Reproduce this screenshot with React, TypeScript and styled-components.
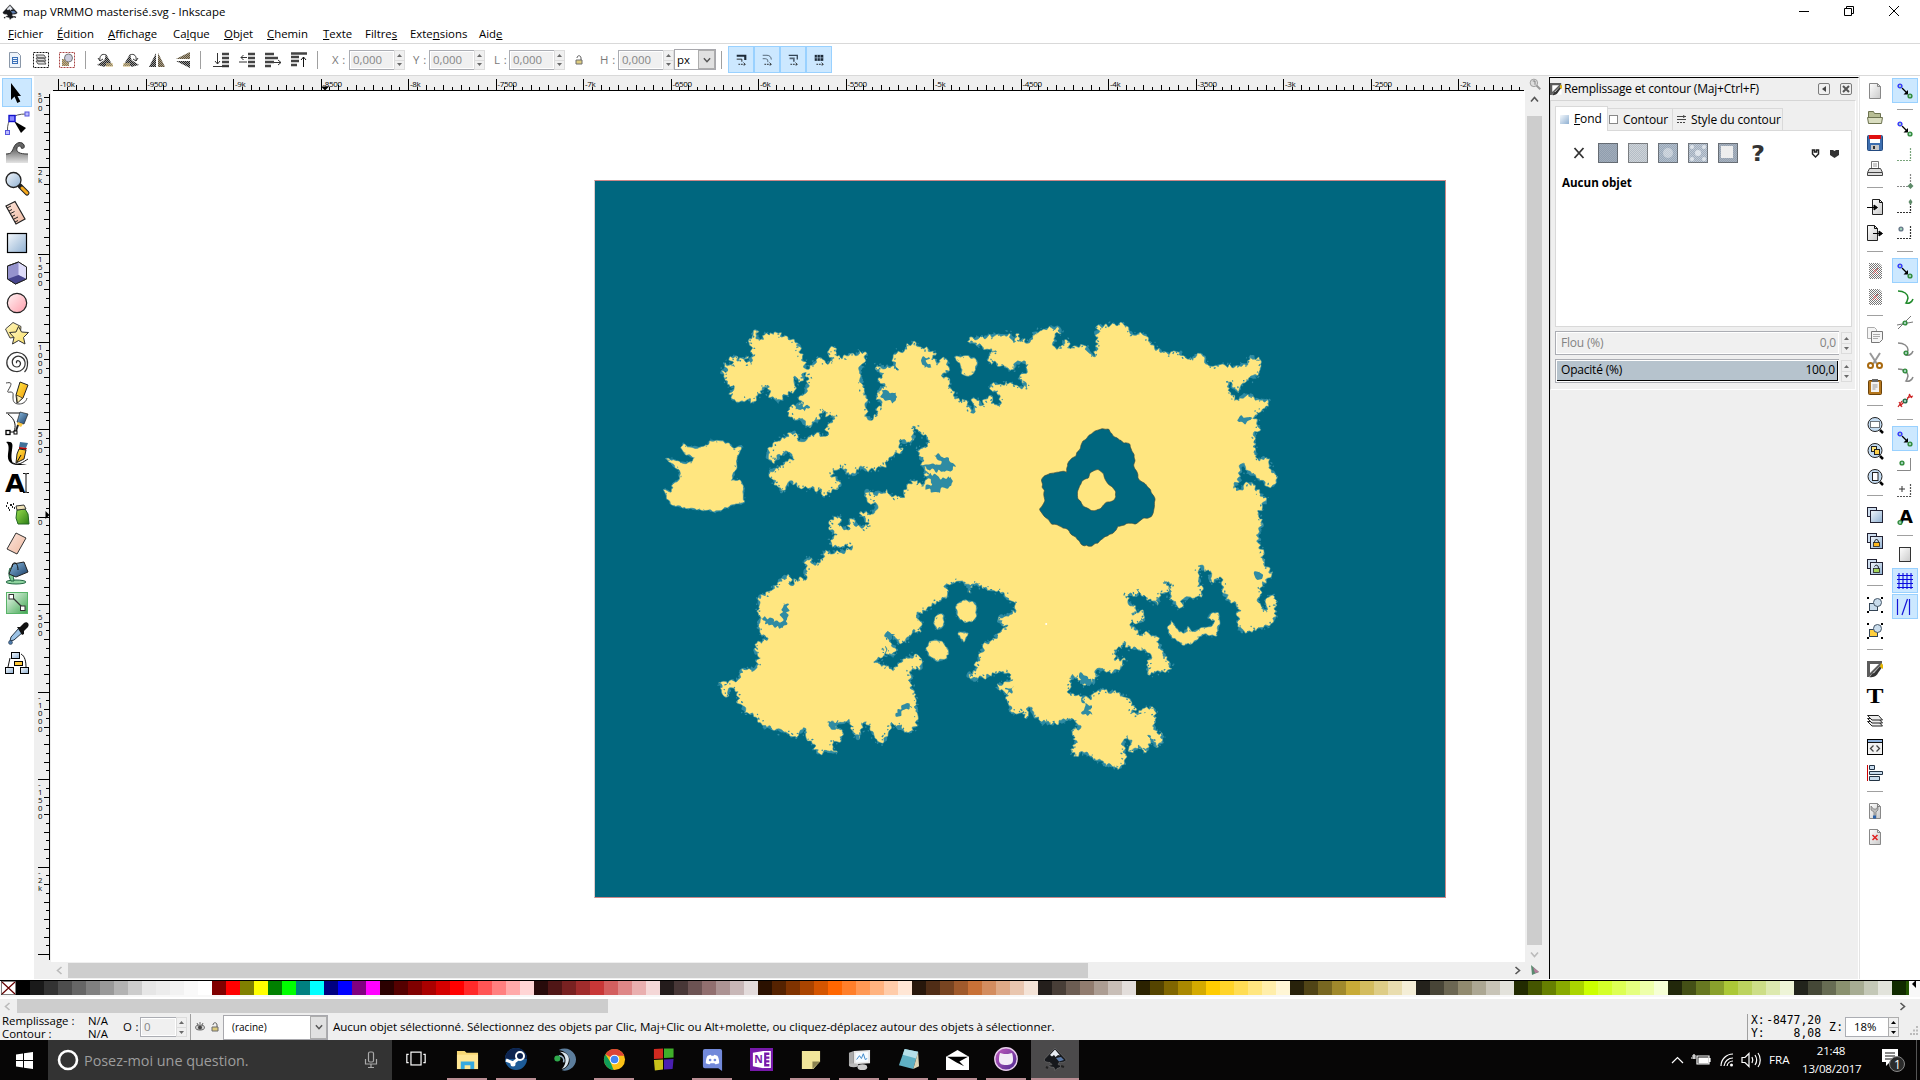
import React from "react";
import styled, { createGlobalStyle } from "styled-components";

const Global = createGlobalStyle`
  *{box-sizing:border-box}
  body{margin:0;overflow:hidden;background:#fff;color:#000;font:11.4px/16px "Open Sans","Noto Sans",sans-serif}
  svg{display:block;flex:none;overflow:visible}
`;

/* ---------- shell ---------- */
const Window = styled.div`width:1920px;height:1080px;display:flex;flex-direction:column;overflow:hidden;background:#fff;`;
const TitleBar = styled.header`height:22px;display:flex;align-items:center;padding:1px 0 0 2px;gap:5px;`;
const TitleText = styled.span`flex:1;letter-spacing:0.02px;`;
const WinButtons = styled.div`display:flex;gap:31px;padding-right:19px;padding-bottom:2px;`;
const MenuBar = styled.nav`height:22px;display:flex;padding:4px 0 0 8px;border-bottom:1px solid #d9d9d9;`;
const MenuItem = styled.span<{ $w: number }>`width:${p => p.$w}px;white-space:nowrap;`;
const Toolbar = styled.div`height:32px;display:flex;align-items:center;padding-left:2px;border-bottom:1px solid #d9d9d9;color:#7a7a7a;`;
const ToolIcon = styled.div`width:26px;height:26px;display:flex;align-items:center;justify-content:center;flex:none;`;
const VSep = styled.i<{ $l?: number; $r?: number; $h?: number }>`width:1px;height:${p => p.$h ?? 18}px;background:#a0a0a0;margin:0 ${p => p.$r ?? 7}px 0 ${p => p.$l ?? 5}px;flex:none;`;
const FieldLabel = styled.span<{ $w: number; $l?: number; $mono?: boolean }>`
  width:${p => p.$w}px;padding-left:${p => p.$l ?? 0}px;flex:none;letter-spacing:.4px;white-space:nowrap;
  ${p => (p.$mono ? 'font-family:"DejaVu Sans Mono",monospace;margin-left:8px;' : "")}
`;
const Entry = styled.div<{ $w: number; $live?: boolean; $pad?: number }>`
  width:${p => p.$w}px;height:20px;border:1px solid #abadb3;border-right:0;
  background:${p => (p.$live ? "#fff" : "#f0f0f0")};color:${p => (p.$live ? "#000" : "#858585")};
  box-shadow:inset 0 0 0 1px #fff;padding:0 0 0 ${p => p.$pad ?? 3}px;line-height:18px;flex:none;
`;
const SpinBox = styled.div<{ $h?: number; $dark?: boolean }>`
  width:11px;height:${p => p.$h ?? 20}px;display:grid;grid-template-rows:1fr 1fr;border:1px solid ${p => (p.$dark ? "#adadad" : "#dcdcdc")};background:#f0f0f0;flex:none;
  & > i{display:flex;align-items:center;justify-content:center}
  & > i + i{border-top:1px solid ${p => (p.$dark ? "#adadad" : "#dcdcdc")}}
`;
const Combo = styled.div<{ $w: number; $h: number; $pad: number; $fs?: number }>`
  width:${p => p.$w}px;height:${p => p.$h}px;border:1px solid #a8a8ad;background:#fff;color:#000;display:flex;align-items:center;
  padding-left:${p => p.$pad}px;justify-content:space-between;font-size:${p => p.$fs ?? 11.4}px;flex:none;
`;
const ComboArrow = styled.span`width:17px;height:100%;background:#e1e1e1;border:1px solid #adadad;display:flex;align-items:center;justify-content:center;`;
const Toggle = styled.div`width:26px;height:27px;background:#cce8ff;border:1px solid #99d1ff;display:flex;align-items:center;justify-content:center;flex:none;`;
const Center = styled.div<{ $w?: number; $h?: number; $l?: number; $r?: number; $gap?: number; $ml?: number }>`
  display:flex;align-items:center;justify-content:center;gap:${p => p.$gap ?? 0}px;
  width:${p => (p.$w ? p.$w + "px" : "auto")};height:${p => (p.$h ? p.$h + "px" : "auto")};
  padding:0 ${p => p.$r ?? 0}px 0 ${p => p.$l ?? 0}px;margin-left:${p => p.$ml ?? 0}px;
`;

/* ---------- body ---------- */
const Body = styled.main`height:903px;display:flex;`;
const ToolBox = styled.aside`width:34px;padding:2px 0 0 2px;display:flex;flex-direction:column;`;
const Tool = styled.div<{ $on?: boolean }>`
  width:30px;height:${p => (p.$on ? 29 : 30)}px;margin-bottom:${p => (p.$on ? 1 : 0)}px;display:flex;align-items:center;justify-content:center;flex:none;
  background:${p => (p.$on ? "#cce8ff" : "transparent")};border:1px solid ${p => (p.$on ? "#99d1ff" : "transparent")};
`;
const Desk = styled.section`
  width:1515px;display:grid;grid-template-columns:17px 1476px 15px;grid-template-rows:15px 871px 16px;background:#efefef;
`;
const RulerSvg = styled.svg`overflow:hidden;`;
const Sheet = styled.div`background:#fff;padding:89px 0 0 543px;margin-right:2px;`;
const Page = styled.div`width:852px;height:718px;border:1px solid #c88;border-left-color:#dcc;background:#00677f;`;
const VScroll = styled.div`display:flex;flex-direction:column;align-items:center;background:#efefef;`;
const VThumb = styled.i`width:15px;height:829px;background:#cdcdcd;margin:8px 0 5px;`;
const HScroll = styled.div<{ $l: number; $r?: number }>`display:flex;align-items:center;justify-content:space-between;padding:0 ${p => p.$r ?? 5}px 0 ${p => p.$l}px;`;
const HThumb = styled.i<{ $w: number; $l: number; $h: number }>`width:${p => p.$w}px;height:${p => p.$h}px;background:#cdcdcd;margin-left:${p => p.$l}px;margin-right:auto;`;

/* ---------- dock ---------- */
const Dock = styled.section`width:310px;margin-top:1px;border-left:1px solid #000;border-top:1px solid #000;background:#efefef;border-right:1px solid #fff;`;
const DockTitle = styled.div`height:22px;display:flex;align-items:center;padding:0 6px 0 0;font-size:12px;`;
const DockName = styled.span`flex:1;padding-left:2px;letter-spacing:-.2px;`;
const DockBtn = styled.span`width:12px;height:12px;border:1px solid #7c7c7c;border-radius:2px;margin-left:10px;display:flex;align-items:center;justify-content:center;`;
const DockFrame = styled.div`width:306px;height:290px;border:1px solid #fff;border-top:1px solid #d5d5d5;border-left-color:#d5d5d5;padding:5px 3px 0 4px;`;
const Tabs = styled.div`display:flex;align-items:flex-end;height:24px;`;
const Tab = styled.div<{ $w: number; $on?: boolean; $l: number }>`
  width:${p => p.$w}px;height:${p => (p.$on ? 25 : 22)}px;margin-bottom:${p => (p.$on ? -1 : 0)}px;padding-left:${p => p.$l}px;
  background:${p => (p.$on ? "#fff" : "#efefef")};border:1px solid #d9d9d9;border-bottom:0;${p => (p.$on ? "" : "border-left:0;")}
  display:flex;align-items:center;gap:5px;font-size:12px;white-space:nowrap;z-index:1;letter-spacing:-.12px;
`;
const TabPane = styled.div`height:197px;border:1px solid #d9d9d9;background:#fff;`;
const PaintRow = styled.div`display:flex;align-items:center;height:22px;margin-top:11px;padding-left:13px;gap:10px;`;
const NoObject = styled.b`display:block;margin:11px 0 0 6px;font-size:11.6px;`;
const SliderRow = styled.div`display:flex;align-items:center;margin-top:4px;gap:2px;`;
const Slider = styled.div<{ $on?: boolean }>`
  width:285px;height:24px;border:1px solid #abadb3;border-right:0;padding:1px;background:#fff;
  & > div{height:20px;padding:0 2px 1px 4px;display:flex;justify-content:space-between;align-items:center;font-size:12px;letter-spacing:-.2px;
    color:${p => (p.$on ? "#000" : "#838383")};background:${p => (p.$on ? "#b6c3cd" : "#f0f0f0")};
    border-right:${p => (p.$on ? "1px solid #000" : "0")};border-bottom:${p => (p.$on ? "1px solid #000" : "0")};}
`;
const SideBars = styled.aside`width:61px;display:flex;border-left:1px solid #e4e4e4;padding-top:2px;`;
const IconCol = styled.div`width:30px;display:flex;flex-direction:column;align-items:center;`;
const SideCell = styled.div<{ $on?: boolean }>`
  width:26px;height:25px;margin-bottom:1px;display:flex;align-items:center;justify-content:center;flex:none;
  background:${p => (p.$on ? "#cce8ff" : "transparent")};border:1px solid ${p => (p.$on ? "#99d1ff" : "transparent")};
`;
const SideSep = styled.i`width:16px;height:1px;background:#a0a0a0;margin:5px 0 6px;flex:none;`;

/* ---------- bottom ---------- */
const PaletteBar = styled.div`height:17px;margin-top:1px;border-top:1px solid #000;background:#f8f8f8;display:flex;padding-left:1px;`;
const Swatches = styled.div`display:flex;width:1908px;height:14px;overflow:hidden;`;
const Swatch = styled.i<{ $c: string }>`width:14px;height:14px;flex:none;background:${p => p.$c};`;
const PaletteScroll = styled.div`height:17px;background:#efefef;border-top:2px solid #fff;`;
const Status = styled.footer`height:26px;background:#efefef;display:flex;align-items:center;`;
const StylePair = styled.div`width:121px;display:grid;grid-template-columns:86px 1fr;line-height:13px;padding-left:2px;`;
const Message = styled.span`flex:1;padding-left:5px;white-space:nowrap;font-size:11.6px;letter-spacing:-.07px;`;
const Coords = styled.div`width:70px;font:11.4px/13px "DejaVu Sans Mono",monospace;& > div{display:flex;justify-content:space-between}`;
const Taskbar = styled.footer`height:40px;background:#070606;display:flex;color:#fff;`;
const Start = styled.div`width:48px;display:flex;align-items:center;justify-content:center;`;
const Search = styled.div`width:344px;background:#333;color:#9d9d9d;display:flex;align-items:center;padding:0 14px 0 9px;font-size:14.4px;`;
const SearchText = styled.span`flex:1;padding:1px 0 0 5px;letter-spacing:-.02px;`;
const Apps = styled.div`display:flex;flex:1;`;
const AppTile = styled.div<{ $line?: boolean; $on?: boolean }>`
  width:48px;margin-right:1px;height:40px;display:grid;grid-template-rows:38px 2px;justify-items:center;align-items:center;background:${p => (p.$on ? "#4b4a4b" : "transparent")};
  &:first-child{margin-right:3px}
  &::after{content:"";width:${p => (p.$on ? 48 : 40)}px;height:2px;background:${p => (p.$line ? "#b98d93" : "transparent")}}
`;
const Tray = styled.div`display:flex;align-items:center;`;
const Lang = styled.span`font-size:11.6px;width:33px;margin-left:-10px;`;
const Clock = styled.div`width:58px;text-align:center;line-height:18px;font-size:11.6px;letter-spacing:-.2px;`;
const Bell = styled.div`width:32px;margin:0 6px 0 18px;display:flex;align-items:center;`;
const Edge = styled.i`width:1px;height:40px;background:#555;margin-right:3px;`;
const HiddenDefs = styled.svg`position:absolute;width:0;height:0;`;

/* ---------- small glyphs ---------- */
const Tri = ({ up, c = "#6a6a6a" }: { up?: boolean; c?: string }) => (
  <svg width="5" height="3" viewBox="0 0 5 3"><path d={up ? "M0 3h5L2.5 0z" : "M0 0h5L2.5 3z"} fill={c} /></svg>
);
const Spin = ({ h, c }: { h?: number; c?: string }) => <SpinBox $h={h} $dark={!!c}><i><Tri up c={c} /></i><i><Tri c={c} /></i></SpinBox>;
const Chev = ({ r = 0, c = "#555", s = 9, w = 1.6 }: { r?: number; c?: string; s?: number; w?: number }) => (
  <svg width={s} height={s} viewBox="0 0 9 9" transform={`rotate(${r})`}><path d="M1 2.5l3.5 4 3.5-4" fill="none" stroke={c} strokeWidth={w} /></svg>
);
const K = { fill: "none", stroke: "#111", strokeWidth: 1 } as const;
const I = ({ s = 16, v = s, children }: { s?: number; v?: number; children: React.ReactNode }) => (
  <svg width={s} height={s} viewBox={`0 0 ${v} ${v}`}>{children}</svg>
);
const Defs = () => (
  <HiddenDefs>
    <defs>
      {[["gb", "#f4f8fc", "#8fb0d2"], ["gp", "#fff5f5", "#ff9dab"], ["gy", "#fff8c8", "#f8dc60"], ["gs", "#fbe5dc", "#f0b9a0"], ["gg", "#f2fbf3", "#3fa650"], ["gw", "#fff", "#c9c9c9"], ["go", "#fff04a", "#f08a00"], ["gn", "#8fc0e6", "#173a63"], ["ggr", "#9be04e", "#2b7d15"], ["gv", "#c55bc0", "#4a2a90"]].map(([id, a, b]) => (
        <linearGradient key={id} id={id} x1="0" y1="0" x2="1" y2="1"><stop offset="0" stopColor={a} /><stop offset="1" stopColor={b} /></linearGradient>
      ))}
      <linearGradient id="gk" x1="0" y1="0" x2="0" y2="1"><stop offset=".3" stopColor="#666" /><stop offset="1" stopColor="#e4e4e4" /></linearGradient>
      <pattern id="chk" width="2" height="2" patternUnits="userSpaceOnUse"><path d="M0 0h1v1H0zM1 1h1v1H1z" fill="#8292a6" /></pattern>
      <pattern id="chd" width="2" height="2" patternUnits="userSpaceOnUse"><path d="M0 0h2v2H0z" fill="#999" /><path d="M0 0h1v1H0zM1 1h1v1H1z" fill="#222" /></pattern>
      <pattern id="chg" width="2" height="2" patternUnits="userSpaceOnUse"><path d="M0 0h1v1H0zM1 1h1v1H1z" fill="#777" /></pattern>
    </defs>
  </HiddenDefs>
);
const InkLogo = ({ s = 16 }: { s?: number }) => (
  <I s={s} v={24}>
    <path d="M12 1L2 11.500c-2 2.500 1 4 5 4l2 2c-2 1-4 0-3 2 2 0 3 1 5 1l1 3 2-2 3-1 1-2c-2-1-4 0-2-3 4 0 9-1 6-4z" fill="#16181c" stroke="#777" strokeWidth=".6" />
    <path d="M12 2.500L7 8l2 1.500 2-1.500 1.500 2L15 8l2 .5z" fill="#e7ebf2" />
    <path d="M13 11l5-1 3 3-5 1.500z" fill="#5b7aa8" /><path d="M3 20l2 1M18 19l3 1" stroke="#222" strokeWidth="2" />
  </I>
);

/* ---------- toolbox ---------- */
const toolIcons: React.ReactNode[] = [
  <path d="M6 2v17l3.500-3.500 2.800 6.500 3-1.500-2.800-5.500H16z" fill="#000" />,
  <><path d="M2.500 20C2 8 8 3 21 3" {...K} stroke="#555" /><path d="M9 10l12 7-5 5z" fill="#000" /><rect x="4" y="4.500" width="6" height="6" fill="#88f" stroke="#11c" strokeWidth="1.400" /><rect x="20" y="1" width="4" height="4" fill="#bbf" stroke="#55d" /><rect x=".5" y="19.500" width="4" height="4" fill="#bbf" stroke="#55d" /></>,
  <><path d="M1 13c6 0 6-3 8-7 2-5 8-6 10-2 1 3-1 4-3 3 1-2-3-3-4 0-1 4 2 6 11 6v9H1z" fill="url(#gk)" /><path d="M1 13c6 0 6-3 8-7 2-5 8-6 10-2 1 3-1 4-3 3 1-2-3-3-4 0-1 4 2 6 11 6" {...K} stroke="#333" /></>,
  <><path d="M15 15l7 7" stroke="#222" strokeWidth="5" strokeLinecap="round" /><path d="M17 17l5 5" stroke="#f5a81c" strokeWidth="3" strokeLinecap="round" /><circle cx="8.500" cy="9" r="7.500" fill="url(#gb)" stroke="#222" strokeWidth="1.300" /></>,
  <><path d="M1 5l9-4.500L20 18l-9 5z" fill="url(#gs)" stroke="#222" strokeWidth="1.200" /><path d="M2 7l4-2M4 10l3-1.500M5.500 12.500l4-2M7 15.500l3-1.500M9 18l4-2M10 21l3-1.500" stroke="#222" /></>,
  <rect x="2.500" y="2.500" width="19" height="19" fill="url(#gb)" stroke="#000" strokeWidth="1.200" />,
  <><path d="M2.500 5l11-4L21.500 6v12l-11 5-8-5z" fill="#9593cd" stroke="#222" /><path d="M13.500 1l8 5v12l-8-4z" fill="#dedcfa" /><path d="M2.500 18l11-4 8 4-11 5z" fill="#47458e" /><path d="M2.500 5l11-4L21.500 6v12l-11 5-8-5z" {...K} stroke="#222" /></>,
  <circle cx="12" cy="12" r="9.700" fill="url(#gp)" stroke="#222" strokeWidth="1.200" />,
  <><path d="M.5 8L8 1.500l8 4-1 10-10 1.500z" fill="url(#gy)" stroke="#444" /><path d="M13.500 5.500l3 5.500 7 .5-5 5 1.500 6.500-6.500-3.500-6 3.500 1.500-6.500-4.500-5 6.500-.5z" fill="url(#gy)" stroke="#333" /></>,
  <path d="M12 12c-1.500-1 0-3 2-2 3 2 1 6-2 6-5 0-6-6-3-9 4-4 10-1 11 4 1 6-4 10-9 9.500C4 20 1 15 2 9.500 3.500 4 8 1 13 1.500c6 .5 10 5.500 9.500 11.500 0 3-1 6-3 8" {...K} stroke="#333" strokeWidth="1.200" />,
  <><path d="M1 2c5-1 6 0 4 4s-4 6 0 5c4 0 3 2 3 5s0 7 6 7c4 0 7-2 8-6" {...K} stroke="#444" /><path d="M15 1l8 3-5 13-6 5-1-8z" fill="url(#go)" stroke="#222" /><path d="M11.500 14l6 3-5 5z" fill="#fdeeb2" stroke="#222" strokeWidth=".7" /></>,
  <><path d="M1 2h15M3 3c8 6 8 12 6 18H4" {...K} /><path d="M15 1l8 2-4 10-7-2z" fill="url(#gn)" stroke="#222" strokeWidth=".7" /><path d="M13 11l5 2-2 3-4-2z" fill="#f7c543" /><path d="M13 14l-2 6" stroke="#222" strokeWidth="2" /><rect x="1" y="19.500" width="4" height="4" fill="#fff" stroke="#000" strokeWidth="1.300" /><rect x="9" y="20" width="3" height="3" fill="#fff" stroke="#000" /></>,
  <><path d="M1 1c7-1 7 2 6 8-1 7-1 13 3 14h12C7 26 2 22 3 13 4 7 4 3 1 1z" fill="#000" /><path d="M8 22c6 3 10-1 15-4" {...K} /><path d="M15 1l8 1-2 5-7-1z" fill="#3f7199" /><path d="M14 6l8 1-1 2-7-1z" fill="#b00" /><path d="M14 8l7 1-2 9-8 4 1-9z" fill="url(#go)" stroke="#222" /><path d="M12 21l4-7" stroke="#111" /></>,
  <><text x="0" y="21" fontFamily="DejaVu Sans" fontWeight="bold" fontSize="24" textLength="20" lengthAdjust="spacingAndGlyphs">A</text><path d="M18 2.500h2l1 .5 1-.5h2M21 3v18M18 21.500h2l1-.5 1 .5h2" {...K} /></>,
  <><path d="M12 9l8-1 3 5 1 10H13l-2-6z" fill="url(#ggr)" stroke="#262" /><path d="M11 5l8-1 2 4-9 1z" fill="#efe3b8" stroke="#333" /><path d="M2 2h1M5 4h2M3 7h1M7 6h1M8 3h1M4 9h1M1 5h1M9 7h1" stroke="#222" strokeWidth="2" /></>,
  <path d="M11 2l10 5-9 16-10-5z" fill="url(#gs)" stroke="#333" />,
  <><ellipse cx="11" cy="21" rx="10" ry="2" fill="#8fd39f" stroke="#264" /><path d="M5 7c-2 5-1 9 1 13h3c-1-5-1-9 0-12z" fill="#7fca93" stroke="#264" /><path d="M8 3l11-2 4 10-12 5-7-3z" fill="url(#gn)" stroke="#222" /><path d="M7 6c0-6 6-6 6 3" {...K} /></>,
  <><rect x="1.500" y="1.500" width="21" height="21" fill="url(#gg)" stroke="#58b368" /><path d="M8 7l9 9" {...K} stroke="#333" strokeWidth="1.300" /><rect x="4" y="3.500" width="4.500" height="4.500" fill="#fff" stroke="#333" /><rect x="15.500" y="15" width="4.500" height="4.500" fill="#fff" stroke="#333" /></>,
  <><path d="M14 7l4 4-9 8-4 1 1-4z" fill="#9cc3e6" stroke="#234" /><path d="M12 6l3 0 4-4c3-2 6 1 4 4l-4 4 0 3-2 1z" fill="#111" /><circle cx="5.500" cy="21.500" r="2" fill="#4d79a8" stroke="#234" strokeWidth=".5" /></>,
  <><path d="M5 7L3 16M16 3c4 2 5 8 5 13" {...K} /><rect x="6.500" y="1.500" width="8" height="6" fill="url(#gb)" stroke="#000" /><rect x="9.500" y="10.500" width="8" height="4" fill="#ffc93a" stroke="#000" /><rect x=".5" y="16.500" width="8" height="6" fill="url(#gb)" stroke="#000" /><rect x="15.500" y="16.500" width="8" height="6" fill="url(#gb)" stroke="#000" /></>,
];

/* ---------- command column ---------- */
const sheet = <><path d="M2.500 .5h8l3 3v12h-11z" fill="url(#gw)" stroke="#888" /><path d="M10.500 .5v3h3" {...K} stroke="#888" /></>;
const lens = (inner: React.ReactNode) => <><circle cx="8" cy="7.500" r="7" fill="#c4dcf2" stroke="#222" strokeWidth="1" />{inner}<path d="M13 13l3 3" stroke="#000" strokeWidth="2.500" /></>;
const dup = (inner?: React.ReactNode) => <><rect x=".5" y=".5" width="9" height="9" fill="#cfdff0" stroke="#223" /><rect x="3.500" y="3.500" width="12" height="12" fill="url(#gb)" stroke="#223" />{inner}</>;
const grp = (c: string) => <><rect x="2.500" y="6.500" width="8" height="7" fill={c} stroke="#345" /><circle cx="10.500" cy="5.500" r="4" fill="#c9dcec" stroke="#456" /><path d="M0 1h2M0 15h2M14 1h2M14 15h2" stroke="#000" strokeWidth="2" /></>;
const deadDoc = <><path d="M2 0h10l3 3v13H2z" fill="url(#chg)" /><path d="M6 11l5-6M6 6l5 5" stroke="#c66" /></>;
const fillStroke = <><rect x=".5" y=".5" width="15" height="15" fill="#fff" /><path d="M0 0h15v3L4 14l-2 2H0z" fill="#333" opacity=".8" /><path d="M3 3h9L3 12z" fill="#fff" /><path d="M15 3L7 12c-3 0-2 3-5 4 6 1 8-2 9-4l5-7z" fill="#333" /><path d="M14 2l2 2v4l-3-2z" fill="#e6b800" /></>;
const commands: (React.ReactNode | null)[] = [
  sheet,
  <><path d="M1.500 14V2.500h5l1 2h6V14z" fill="#b7bd94" stroke="#6d7350" /><path d="M.5 8.500h15l-1 6h-13z" fill="#d9ddc0" stroke="#6d7350" /></>,
  <><rect x=".5" y=".5" width="15" height="15" rx="1" fill="#3d6fb0" stroke="#234a80" /><path d="M2 0h12v4H2z" fill="#e01010" /><path d="M3 4h10v4H3z" fill="#fff" /><path d="M4 10h8v5H4z" fill="#c8c8c8" /><path d="M6 11h2v3H6z" fill="#333" /></>,
  <><path d="M4.500 7V.5h7V7" fill="#fff" stroke="#777" /><path d="M6 3h4M6 5h4" stroke="#999" /><path d="M2.500 7.500h11l2 4v3H.5v-3z" fill="#ddd" stroke="#444" /><path d="M1 11.500h14" stroke="#444" /></>,
  null,
  <><path d="M5.500.5h7l3 3v12h-10z" fill="url(#gw)" stroke="#222" /><path d="M12.500.5v3h3" {...K} /><path d="M0 8.500h8M7 6l3.500 2.500L7 11z" fill="#000" stroke="#000" /></>,
  <><path d="M.5.5h7l3 3v12H.5z" fill="url(#gw)" stroke="#222" /><path d="M7.500.5v3h3" {...K} /><path d="M6 8.500h8M12 6l3.500 2.500L12 11z" fill="#000" stroke="#000" /></>,
  null, deadDoc, deadDoc, null,
  <><path d="M.5.500h7l2 2v9h-9z" fill="#f5f5f5" stroke="#aaa" /><path d="M4.500 4.500h11v8l-3 3h-8z" fill="#f5f5f5" stroke="#777" /><path d="M6 7.500h7M6 9.500h7M6 11.500h5" stroke="#aaa" /></>,
  <><path d="M3 0l7 11M13 0L6 11" stroke="#999" strokeWidth="2" /><circle cx="3.500" cy="12.500" r="2.500" fill="none" stroke="#a8690f" strokeWidth="2" /><circle cx="12.500" cy="12.500" r="2.500" fill="none" stroke="#a8690f" strokeWidth="2" /></>,
  <><rect x="1.500" y="1.500" width="13" height="14" rx="1" fill="#b5771d" stroke="#6b430a" /><path d="M4 3h8v10H4z" fill="#f4f4f4" /><path d="M5 0h6v3H5z" fill="#666" /><path d="M5.500 6h5M5.500 8h5M5.500 10h3" stroke="#999" /></>,
  null,
  lens(<rect x="3.500" y="4.500" width="9" height="6" fill="#fff" stroke="#000" strokeDasharray="1 1" />),
  lens(<><rect x="4.500" y="3.500" width="5" height="5" fill="#ffe57a" stroke="#222" /><rect x="7.500" y="6.500" width="5" height="5" fill="#ffd24a" stroke="#222" /></>),
  lens(<rect x="5.500" y="3.500" width="5.500" height="8" fill="#fff" stroke="#222" />),
  null, dup(),
  dup(<><rect x="6.500" y="9.500" width="6" height="4" fill="#ffb81c" stroke="#222" strokeWidth=".8" /><path d="M7.500 9.500c0-4 4-4 4 0" {...K} /></>),
  dup(<><rect x="6.500" y="9.500" width="6" height="4" fill="#a3d55a" stroke="#222" strokeWidth=".8" /><path d="M7.500 7.500c1-2 4-2 4 2" {...K} /></>),
  null, grp("#c9dcec"), grp("#ffcf3e"), null,
  fillStroke,
  <text x="-.5" y="15.500" fontFamily="Liberation Serif" fontWeight="bold" fontSize="22" textLength="17" lengthAdjust="spacingAndGlyphs">T</text>,
  <g fill="#eee" stroke="#222"><path d="M.5 8.500h11l4 4.500H5z" /><path d="M.5 5.500h11l4 4.500H5z" /><path d="M.5 2.500h11l4 4.500H5z" /></g>,
  <><rect x=".5" y=".5" width="15" height="15" fill="#f2f2f2" stroke="#000" /><path d="M1 1h14v2H1z" fill="#8fb4e0" /><path d="M1 3.500h14" {...K} /><path d="M6.500 6.500l-3 3 3 3M9.500 6.500l3 3-3 3" {...K} stroke="#444" strokeWidth="1.300" /></>,
  <><path d="M.5 0v16" stroke="#c00" /><g fill="#c9dcee" stroke="#234"><path d="M2.500.5h5v4h-5zM2.500 6.500h13v3h-13zM2.500 11.500h10v4h-10z" /></g></>,
  null,
  <>{sheet}<path d="M4 3v4l3 2v6h2V9l2-2V3L9.500 6h-3z" fill="#bbb" stroke="#666" strokeWidth=".6" /><path d="M6 12.500h3v3H6z" fill="#2a62ab" /></>,
  <>{sheet}<path d="M5.500 6l5 5M10.500 6l-5 5" stroke="#e02020" strokeWidth="1.500" /></>,
];

/* ---------- snap column ---------- */
const node = (x: number, y: number, c = "#2f8a3a") => <circle cx={x} cy={y} r="1.900" fill="#9fd0b8" stroke={c} strokeWidth="1.400" />;
const snapMain = <><path d="M5 5l5 5" stroke="#000" strokeWidth="1.300" /><path d="M11 7v4.500H6.500z" fill="#000" />{node(3, 3, "#33f")}{node(13, 13)}</>;
const dashCorner = (c = "#777") => <path d="M13.500 1v12.500H0" fill="none" stroke={c} strokeWidth="1.200" strokeDasharray="2 1" />;
const curve = (c: string) => <path d="M1 2c6 0 10 3 10 7-.5 2-1 4-2 5 3 1 6-1 7-4" fill="none" stroke={c} strokeWidth="1.500" />;
const snaps: ({ on?: boolean; g: React.ReactNode } | null)[] = [
  { on: true, g: snapMain }, null, { g: snapMain },
  { g: dashCorner("#79a57c") }, { g: <>{dashCorner("#888")}<path d="M13.500 10l3 3-3 3-3-3z" fill="#5d8a68" /></> },
  { g: <>{dashCorner("#333")}<path d="M13.500 0l2 3-2 3-2-3z" fill="#5d8a68" /></> },
  { g: <>{dashCorner("#333")}{node(4, 4, "#678")}</> }, null,
  { on: true, g: snapMain }, { g: curve("#1f8a2a") },
  { g: <><path d="M1 14L14 1M0 10l16-3" {...K} stroke="#777" />{node(8, 8)}</> },
  { g: <>{curve("#888")}{node(9, 12)}</> }, { g: <>{curve("#888")}{node(8, 4)}</> },
  { g: <><path d="M1 14l4-6M2 9l3 5M3 13l4-4M10 7l3-6M12 1l3 4M10 5l6-2" stroke="#c22" strokeWidth="1.200" />{node(8, 8, "#264")}</> },
  null, { on: true, g: snapMain },
  { g: <><path d="M13.500 1v12.500H0" {...K} stroke="#888" />{node(5, 6)}</> },
  { g: <>{dashCorner("#555")}<path d="M5 3v6M2 6h6" {...K} stroke="#333" /></> },
  { g: <><text x="2" y="14" fontFamily="DejaVu Sans" fontWeight="bold" fontSize="18">A</text>{node(3, 13.5)}</> },
  null,
  { g: <rect x="2.500" y=".5" width="11" height="14" fill="url(#gw)" stroke="#333" /> },
  { on: true, g: <path d="M0 2.500h16M0 6.500h16M0 10.500h16M0 14.500h16M2 0v16M6 0v16M10 0v16M14 0v16" stroke="#0a0ae0" strokeWidth="1.100" /> },
  { on: true, g: <path d="M.5 0v16M12.500 0v16M5 16L10.500 0" stroke="#1414d8" strokeWidth="1.200" /> },
];

/* ---------- rulers ---------- */
const hLabels = ["-10k", "-9500", "-9k", "-8500", "-8k", "-7500", "-7k", "-6500", "-6k", "-5500", "-5k", "-4500", "-4k", "-3500", "-3k", "-2500", "-2k"];
const vLabels = ["2500", "2k", "1500", "1000", "500", "0", "-500", "-1000", "-1500", "-2k", "-2500"];
const HRuler = () => {
  const ticks: React.ReactNode[] = [];
  for (let i = 0; i < 168; i++) {
    const x = Math.round(7 + i * 8.75) + 0.5;
    if (x > 1472) break;
    ticks.push(<path key={i} d={`M${x} ${i % 10 === 0 ? 3 : i % 2 ? 11 : 9}V14`} stroke="#000" />);
  }
  return (
    <RulerSvg width="1476" height="15">
      {ticks}
      {hLabels.map((l, i) => <text key={l} x={9 + i * 87.5} y="10.500" fontSize="8" letterSpacing="-.35">{l}</text>)}
      <path d="M2 14.500H1473" stroke="#000" /><path d="M270 10.500h8l-4 4z" />
    </RulerSvg>
  );
};
const VRuler = () => {
  const ticks: React.ReactNode[] = [];
  for (let i = 0; i < 104; i++) {
    const y = Math.round(-12 + i * 8.75) + 0.5;
    if (y < 3 || y > 868) continue;
    ticks.push(<path key={i} d={`M${i % 10 === 0 ? 4 : i % 2 ? 12 : 10} ${y}H15`} stroke="#000" />);
  }
  return (
    <RulerSvg width="17" height="871">
      {ticks}
      {vLabels.map((l, i) => l.split("").map((ch, j) => {
        const y = -5 + i * 87.5 + j * 8;
        return y > 0 && y < 870 ? <text key={l + j} x="4" y={y < 4 ? 6 : y + 1} fontSize={y < 4 ? 6 : 7.8}>{ch}</text> : null;
      }))}
      <path d="M15.500 3V869" stroke="#000" /><path d="M11.500 420v8l4-4z" />
    </RulerSvg>
  );
};

/* ---------- map ---------- */
const coast = "245,212 262,218 250,190 268,192 280,200 275,170 290,168 300,182 308,170 325,168 318,185 335,190 340,160 332,130 328,115 342,115 340,95 354,92 352,108 360,122 375,106 400,100 418,100 430,112 450,115 465,125 478,132 480,155 488,170 497,190 498,205 510,208 520,195 530,178 550,180 565,190 580,188 568,165 572,148 584,142 590,152 588,165 610,172 635,162 655,160 660,152 675,155 676,180 665,195 668,230 665,260 672,285 686,300 680,320 678,345 690,358 705,352 715,340 712,325 726,320 720,300 710,290 712,275 722,262 740,260 728,250 715,240 730,232 722,215 708,210 710,192 722,195 735,205 745,195 775,212 757,185 762,170 770,160 790,152 800,135 815,130 828,125 835,140 855,145 880,152 888,165 880,178 900,188 905,178 925,180 930,205 920,218 908,225 930,245 937,265 945,290 960,305 975,300 985,310 1000,340 1002,318 1000,295 1015,300 1030,318 1037,300 1055,290 1062,312 1078,318 1086,305 1082,285 1060,275 1050,262 1055,250 1080,255 1100,245 1130,258 1165,262 1140,240 1160,215 1165,195 1145,185 1130,190 1125,212 1105,205 1085,200 1070,190 1045,185 1050,165 1070,160 1050,150 1030,140 1010,132 990,130 988,120 1000,115 1020,112 1070,105 1115,100 1120,125 1135,98 1140,120 1155,118 1160,130 1178,115 1185,95 1205,88 1225,82 1260,85 1265,100 1245,105 1250,120 1240,140 1265,145 1275,120 1288,125 1295,145 1310,140 1320,135 1340,140 1348,155 1365,170 1372,150 1370,110 1375,80 1400,75 1450,72 1470,95 1490,105 1510,100 1525,120 1545,140 1570,155 1600,158 1620,152 1630,170 1660,180 1675,160 1700,178 1710,200 1735,195 1760,197 1800,195 1825,190 1832,165 1845,175 1862,175 1860,205 1855,230 1825,240 1808,255 1800,272 1785,272 1780,250 1762,242 1768,270 1783,300 1800,290 1830,280 1845,300 1888,300 1880,320 1850,335 1845,350 1862,375 1855,395 1842,410 1845,450 1855,482 1875,470 1892,485 1895,510 1908,525 1905,555 1885,558 1865,540 1840,525 1820,510 1810,490 1805,510 1800,545 1785,555 1800,570 1815,555 1835,548 1845,565 1865,580 1880,605 1865,625 1855,640 1870,670 1858,690 1860,740 1870,760 1875,790 1900,822 1885,835 1865,860 1855,895 1865,910 1870,935 1885,925 1880,905 1895,885 1905,895 1912,935 1900,960 1885,980 1860,985 1830,992 1800,992 1795,960 1800,925 1780,905 1760,900 1752,870 1740,828 1725,840 1712,850 1715,820 1700,810 1675,798 1680,820 1675,860 1690,865 1685,890 1650,895 1630,900 1625,925 1600,905 1590,885 1598,850 1570,842 1588,865 1575,880 1560,880 1555,915 1535,905 1515,885 1500,885 1495,868 1490,890 1470,882 1458,885 1468,905 1490,925 1480,945 1500,930 1515,940 1510,965 1490,970 1480,960 1470,975 1485,980 1500,1005 1530,1000 1555,1010 1560,1030 1570,1060 1600,1105 1570,1115 1525,1120 1525,1090 1535,1075 1530,1055 1490,1050 1465,1040 1455,1025 1445,1045 1422,1050 1425,1075 1460,1080 1445,1100 1420,1115 1395,1110 1370,1110 1380,1130 1350,1155 1330,1150 1300,1125 1290,1155 1285,1180 1320,1190 1355,1200 1370,1175 1395,1168 1430,1175 1450,1185 1465,1195 1475,1215 1490,1225 1470,1240 1490,1245 1515,1225 1543,1225 1545,1260 1550,1300 1570,1298 1570,1325 1555,1342 1540,1330 1525,1305 1535,1330 1515,1358 1500,1335 1485,1350 1470,1358 1475,1330 1465,1312 1452,1325 1455,1385 1435,1408 1425,1395 1400,1400 1370,1375 1350,1370 1330,1355 1310,1370 1295,1355 1305,1330 1302,1285 1320,1285 1310,1265 1280,1262 1230,1272 1200,1262 1180,1240 1170,1220 1160,1258 1150,1230 1120,1245 1110,1220 1100,1195 1105,1180 1080,1175 1075,1150 1110,1145 1115,1125 1080,1110 1050,1125 1015,1140 988,1135 985,1120 1010,1115 1010,1090 1018,1070 1030,1040 1060,1020 1080,1000 1105,975 1080,970 1075,955 1110,940 1130,930 1125,905 1105,900 1095,878 1060,870 1020,860 1000,850 990,880 985,855 960,845 940,850 918,855 925,885 900,900 870,920 832,945 845,975 840,1000 820,990 805,1010 800,1030 775,1025 760,1005 738,1000 750,1020 770,1045 765,1070 745,1060 735,1040 740,1070 705,1080 735,1095 760,1110 775,1090 800,1070 835,1065 845,1090 840,1110 808,1110 815,1150 825,1190 830,1240 832,1270 820,1295 790,1290 765,1270 750,1275 745,1310 725,1330 705,1315 700,1295 680,1270 668,1268 665,1300 658,1318 640,1290 630,1260 600,1270 575,1265 590,1280 610,1290 605,1320 580,1320 580,1340 595,1355 530,1358 518,1330 500,1310 490,1280 470,1315 450,1300 430,1300 410,1285 380,1285 355,1255 340,1240 315,1240 310,1215 292,1205 295,1175 270,1165 268,1188 245,1170 237,1150 265,1152 300,1135 305,1110 345,1105 360,1075 345,1055 355,1030 385,1015 365,1000 355,975 358,945 355,900 370,885 400,870 415,850 448,822 455,855 470,840 500,835 498,775 515,775 520,790 545,785 555,750 580,760 630,750 638,735 600,742 570,735 575,715 590,710 570,690 575,660 600,645 605,665 600,680 625,690 628,665 645,655 650,680 690,680 685,665 662,650 665,635 690,645 705,630 710,612 685,605 675,580 690,568 700,585 740,568 755,590 785,595 800,570 820,540 845,555 860,540 858,510 845,490 840,460 830,450 860,440 872,430 850,405 820,378 815,395 825,420 800,430 785,420 780,435 790,450 760,465 745,485 725,505 690,510 650,505 645,525 620,522 610,495 580,510 575,525 600,545 595,565 570,575 555,590 545,570 510,565 480,560 455,545 440,560 430,580 415,560 395,535 390,510 410,505 425,505 440,485 462,480 455,458 420,465 405,487 388,480 383,460 400,440 415,420 440,410 455,395 470,400 475,420 500,415 540,400 560,412 570,405 560,380 580,365 588,345 565,350 548,328 540,355 520,375 505,378 480,360 455,350 445,335 455,315 490,315 480,300 500,265 508,230 498,218 480,250 465,228 470,265 440,285 415,305 395,295 385,270 385,255 370,270 355,290 340,305 320,298 305,300 275,300 270,275 285,265 265,250 255,235";
const isles = [
  "78,475 110,480 125,488 160,485 165,475 135,460 122,440 130,428 150,440 180,442 208,435 210,420 240,422 275,432 282,445 308,438 300,455 292,470 290,510 275,540 300,540 313,555 312,612 290,610 270,620 225,638 205,630 150,625 100,618 85,600 72,570 95,575 100,550 122,535 118,510 95,490",
  "945,170 980,168 1005,175 1015,190 1005,215 985,228 965,220 960,190",
  "952,915 965,903 982,901 1002,905 1012,918 1012,945 1000,962 982,966 962,962 950,945",
  "895,942 912,942 916,965 905,985 893,990 882,970",
  "955,997 988,997 980,1020 970,1027",
  "870,1025 890,1020 910,1028 925,1045 928,1062 915,1080 890,1083 865,1065 858,1045",
  "1595,960 1610,985 1630,1000 1648,980 1655,995 1710,980 1728,965 1705,955 1712,940 1735,938 1742,965 1730,1010 1690,1003 1665,1025 1630,1035 1595,1010 1583,985",
];
const shoals = [
  "722,270 745,275 770,278 765,305 745,298 728,295", "470,312 512,322 495,335 475,330",
  "362,955 395,955 400,968 425,965 432,905 446,915 440,975 425,985 385,980",
  "880,465 925,470 948,500 915,515 870,512 850,500 905,490", "860,525 890,520 900,535 938,530 930,560 890,578 855,560 880,550",
  "768,1240 800,1210 820,1220 790,1232 780,1250", "1848,815 1862,810 1868,830 1858,840 1848,835",
  "1100,1160 1125,1158 1120,1180 1105,1185", "1325,1200 1360,1215 1345,1230 1358,1245 1325,1240 1335,1222",
  "845,175 870,170 860,190 880,205 855,205", "1800,350 1845,355 1820,370 1800,368", "1320,1120 1345,1130 1355,1150 1330,1155",
  "740,998 765,1005 760,1015 742,1012", "562,1268 600,1262 590,1275 580,1290",
];
const lake = "343,395 370,385 390,388 395,400 430,428 452,435 465,470 465,500 480,540 510,565 527,600 518,650 490,655 465,672 450,670 415,680 405,695 370,715 340,737 312,737 290,715 260,685 215,670 195,650 180,628 195,605 195,570 187,560 188,532 205,522 262,515 265,485 285,470 300,450 312,420";
const islet = "355,508 372,520 380,545 408,570 408,598 380,608 360,628 335,633 312,618 295,595 295,570 308,543 328,532 332,518";

/* Adds a repeatable, irregular crinkle of small hooks along every edge of an outline. */
const crinkle = (src: string, amp: number, seed = 7, step = 8) => {
  const pts = src.split(" ").map(p => p.split(",").map(Number));
  let s = seed * 7919;
  const rnd = () => ((s = (s * 16807) % 2147483647) / 2147483647) * 2 - 1;
  const out: [number, number][] = [];
  pts.forEach(([x, y], i) => {
    const [nx, ny] = pts[(i + 1) % pts.length];
    const len = Math.hypot(nx - x, ny - y);
    const ux = (nx - x) / len, uy = (ny - y) / len;
    const n = Math.max(1, Math.round(len / step));
    for (let k = 0; k < n; k++) {
      const t = (k / n) * len + rnd() * step * 0.45;
      const o = rnd() * amp * (k === 0 ? 0.6 : 1.2);
      out.push([x + ux * t - uy * o, y + uy * t + ux * o]);
    }
  });
  const mid = (a: [number, number], b: [number, number]) => `${((a[0] + b[0]) / 2).toFixed(1)} ${((a[1] + b[1]) / 2).toFixed(1)}`;
  let d = "M" + mid(out[out.length - 1], out[0]);
  out.forEach((p, i) => { d += `Q${p[0].toFixed(1)} ${p[1].toFixed(1)} ${mid(p, out[(i + 1) % out.length])}`; });
  return d + "Z";
};
const Continent = () => (
  <svg width="850" height="715" viewBox="0 0 850 715">
    <g transform="translate(44.500 119) scale(.33333)">
      <g fill="#2f8ba3">
        <path d={crinkle(coast, 8, 5, 7)} />
        {isles.map((p, i) => <path key={i} d={crinkle(p, 4, i + 23, 7)} />)}
      </g>
      <g fill="#ffe680" stroke="#2f8ba3" strokeWidth="1.800" strokeLinejoin="round">
        <path d={crinkle(coast, 8, 7, 6)} />
        {isles.map((p, i) => <path key={i} d={crinkle(p, 4, i + 3, 7)} />)}
      </g>
      <g fill="none" stroke="#2f8ba3" strokeWidth="4" strokeDasharray="4 13 6 9 3 16">
        <path d={crinkle(coast, 11, 31, 6)} />
        {isles.map((p, i) => <path key={i} d={crinkle(p, 5, i + 41, 6)} strokeWidth="3" />)}
      </g>
      <g fill="#2f8ba3">{shoals.map((p, i) => <path key={i} d={crinkle(p, 7, i + 11, 6)} />)}</g>
      <g transform="translate(1020 0)" stroke="#3c4a3c" strokeWidth="2">
        <path d={crinkle(lake, 2.500)} fill="#00677f" /><path d={crinkle(islet, 1.500)} fill="#ffe680" />
        <circle cx="200" cy="972" r="3" fill="#fff" stroke="none" />
      </g>
    </g>
  </svg>
);

/* ---------- palette ---------- */
const palette = ("000000 1a1a1a 333333 4d4d4d 666666 808080 999999 b3b3b3 cccccc e6e6e6 ececec f2f2f2 f9f9f9 ffffff " +
  "800000 ff0000 808000 ffff00 008000 00ff00 008080 00ffff 000080 0000ff 800080 ff00ff " +
  "2b0000 550000 800000 aa0000 d40000 ff0000 ff2a2a ff5555 ff8080 ffaaaa ffd5d5 280b0b 501616 782121 a02c2c c83737 d35f5f de8787 e9afaf f4d7d7 241c1c 483737 6c5353 916f6f ac9393 c8b7b7 e3dbdb " +
  "2b1100 552200 803300 aa4400 d45500 ff6600 ff7f2a ff9955 ffb380 ffccaa ffe6d5 28170b 502d16 784421 a05a2c c87137 d38d5f deaa87 e9c6af f4e3d7 241f1c 483e37 6c5d53 917c6f ac9d93 c8beb7 e3dedb " +
  "2b2200 554400 806600 aa8800 d4aa00 ffcc00 ffd42a ffdd55 ffe680 ffeeaa fff6d5 28220b 504416 786721 a0892c c8ab37 d3bc5f decd87 e9ddaf f4eed7 24221c 484537 6c6753 918a6f aca793 c8c4b7 e3e2db " +
  "222b00 445500 668000 88aa00 aad400 ccff00 d4ff2a ddff55 e5ff80 eeffaa f6ffd5 22280b 445016 677821 89a02c abc837 bcd35f cdde87 dde9af eef4d7 22241c 454837 676c53 8a916f a7ac93 c4c8b7 e2e3db 112b00 225500").split(" ");

/* ---------- toolbar glyphs ---------- */
const bars = (flip: boolean, arrow: string) => (
  <g><path d={flip ? "M0 2h9M0 6h13M0 10h9M0 14h6" : "M9 2h7M9 6h7M9 10h7M9 14h7"} stroke="#444" strokeWidth="2.500" /><path d={arrow} fill="none" stroke="#333" /></g>
);
const flipTri = <><path d="M7 1v14H0z" fill="url(#chd)" /><path d="M9 1v14h7z" fill="url(#chd)" /><path d="M9 1v14h7z" fill="#c9a96a" opacity=".35" /></>;
const rot = <><path d="M6 14h10L9 2z" fill="url(#chd)" /><path d="M0 13l8 2 1-8z" fill="url(#chd)" /><path d="M9 11h7v4H9z" fill="#d9c187" opacity=".6" /><path d="M3 9c-1-5 2-8 6-6M1 6l2 3 3-2" {...K} stroke="#333" /></>;
const toolbarA = [
  <><path d="M2.500 .5h8l3 3v12h-11z" fill="#eef4fb" stroke="#8a97a8" /><path d="M5 5.500h6M5 7.500h6M5 9.500h6M5 11.500h6M5.500 5v7M10.500 5v7" stroke="#3a70b8" /></>,
  <><rect x=".5" y=".5" width="15" height="15" {...K} strokeDasharray="2 1" /><g fill="#ddd" stroke="#555"><path d="M3 9h8l2 3H5zM3 6h8l2 3H5zM3 3h8l2 3H5z" /></g></>,
  <><rect x=".5" y=".5" width="15" height="15" {...K} stroke="#a44" strokeDasharray="2 1" /><path d="M3 7h7v7H3z" fill="#d7b56b" /><path d="M3 7h7v7H3z" fill="url(#chg)" /><circle cx="9.500" cy="6" r="4" fill="#ccd" stroke="#777" /></>,
];
const toolbarB = [rot, <g transform="matrix(-1 0 0 1 16 0)">{rot}</g>, flipTri, <g transform="rotate(-90 8 8)">{flipTri}</g>];
const toolbarC = [bars(false, "M4.500 1v11M2 9l2.500 3L7 9M0 14.500h16"), bars(false, "M8 5.500H2M4.500 3L2 5.500 4.500 8M0 10h8"), bars(true, "M9 10.500h7M13 8l3 2.500-3 2.500"), <><path d="M0 1.500h16M0 5h8M0 9h8M0 13h6" stroke="#444" strokeWidth="2.300" /><path d="M12.500 15V5M10 8l2.500-3L15 8" {...K} /></>];
const toggles = [
  <><path d="M2 2h10v5" fill="none" stroke="#1c2a38" strokeWidth="2.500" /><path d="M2 6h6v3" {...K} /><path d="M4 12h8M10 10l2 2-2 2" {...K} strokeDasharray="2 1" /></>,
  <><path d="M2 1.500h5c3 0 5 2 5 5M2 5.500h3c3 0 3 2 3 4" {...K} stroke="#456" /><path d="M4 12h8M10 10l2 2-2 2" {...K} strokeDasharray="2 1" /></>,
  <><path d="M2 1.500h10v5" fill="none" stroke="#345" strokeWidth="1.500" /><path d="M3 4h6v5H7V6H3z" fill="#567" /><path d="M4 12h8M10 10l2 2-2 2" {...K} strokeDasharray="2 1" /></>,
  <><path d="M2 1h10v7H2z" fill="#1c2a38" /><path d="M2 4.500h10M5 1v7M8.500 1v7" stroke="#cce8ff" strokeWidth=".7" /><path d="M4 12h8M10 10l2 2-2 2" {...K} strokeDasharray="2 1" /></>,
];
const Lock = () => <I s={10} v={10}><g opacity=".85"><path d="M2 5h6v4H2z" fill="#d9c46a" stroke="#555" /><path d="M3 3c0-3 4-3 4 0v2" {...K} stroke="#444" /></g></I>;

/* ---------- taskbar icons ---------- */
const apps: { g: React.ReactNode; line?: boolean; on?: boolean }[] = [
  { g: <g fill="none" stroke="#fff" strokeWidth="1.300"><rect x="6.500" y="4.500" width="11" height="14" /><path d="M4 7H2v9h2M20 7h2v9h-2" /></g> },
  { line: true, g: <><path d="M1 3h8l2 2h12v17H1z" fill="#f7d774" /><path d="M1 7h22v15H1z" fill="#ffe694" /><path d="M5 22v-8h14v8h-4v-4H9v4z" fill="#36a9e0" /></> },
  { line: true, g: <><circle cx="12" cy="12" r="11" fill="#1c5a96" /><path d="M1 12a11 11 0 0 1 22 0z" fill="#0d2450" /><circle cx="16" cy="9" r="4" fill="none" stroke="#fff" strokeWidth="2" /><path d="M2 13l7 3 5-4" stroke="#fff" strokeWidth="3" fill="none" /><circle cx="9" cy="17" r="2.500" fill="#fff" /></> },
  { g: <><path d="M5 2a13 13 0 0 1 12 0c8 5 8 15 0 20-3 2-7 2-9 1 7-3 9-7 8-12S11 3 5 2z" fill="#5c7d9c" /><path d="M6 4c8 0 11 6 9 11-1 4-4 6-7 7 3-3 4-6 4-9 0-4-2-7-6-9z" fill="#dbe7f0" /><path d="M5 8c4 0 6 3 5 7" fill="none" stroke="#9fb9cf" strokeWidth="1.600" /><circle cx="3.500" cy="11" r="3.200" fill="#2faa4c" /></> },
  { line: true, g: <><circle cx="12" cy="12" r="11" fill="#fbc116" /><path d="M12 12L2.500 6.500A11 11 0 0 1 21.500 6.500L22 8H12z" fill="#db4437" /><path d="M2.500 6.500L8 15l3 8A11 11 0 0 1 2.500 6.500z" fill="#0f9d58" /><circle cx="12" cy="12" r="5" fill="#fff" /><circle cx="12" cy="12" r="4" fill="#4285f4" /></> },
  { g: <><path d="M2 1l9.500-.500v10.500l-9.500.5z" fill="#d02a20" /><path d="M12.500 .5H22.500v9.500l-10 .5z" fill="#3fae2a" /><path d="M2 12.500l9.500-.5V22.500l-8.500 1z" fill="#c9c21a" /><path d="M12.500 12L22.500 11.500l-1 10.500-9 .5z" fill="#4a1fb0" /></> },
  { line: true, g: <><path d="M4 1h16a2 2 0 0 1 2 2v21l-4-3H4a2 2 0 0 1-2-2V3a2 2 0 0 1 2-2z" fill="#7289da" /><path d="M5 16c0-4 1-7 2-8l3-1 1 1h2l1-1 3 1c1 1 2 4 2 8-2 1-3 1-4 1l-1-1h-4l-1 1c-1 0-2 0-4-1z" fill="#fff" /><circle cx="9.500" cy="12.500" r="1.400" fill="#7289da" /><circle cx="14.500" cy="12.500" r="1.400" fill="#7289da" /></> },
  { g: <><path d="M0 0h24v24H0z" fill="#7719aa" /><path d="M14 4h7v16h-7z" fill="none" stroke="#fff" strokeWidth="1.500" /><path d="M17 8h4M17 12h4M17 16h4" stroke="#fff" strokeWidth="1.500" /><path d="M3 5l11-2v18L3 19z" fill="#fff" /><text x="4.500" y="16" fontSize="11" fontWeight="bold" fill="#7719aa">N</text></> },
  { line: true, g: <><path d="M3 3h19v11l-7 8H3z" fill="#f1e59a" /><path d="M14 22v-8h8z" fill="#8a8250" /></> },
  { line: true, g: <><path d="M1 5l5-2v14l-5 1z" fill="#aaa" /><path d="M6 3l17-1v14l-17 1z" fill="#e8e8e8" /><path d="M8 5l13-1v10l-13 1z" fill="#f6fbff" /><path d="M9 12l3-4 2 3 2-5 2 6 2-1" fill="none" stroke="#3a86c8" /><ellipse cx="15" cy="20" rx="5" ry="3" fill="#ccc" /><ellipse cx="6" cy="18" rx="5" ry="2" fill="#bbb" /></> },
  { line: true, g: <><path d="M8 1l14 3-5 18-15-4z" fill="#5fb0c3" /><path d="M8 1l14 3-2 7-14-4z" fill="#b5dfe8" /><path d="M22 4l1 15-6 3z" fill="#ddd5b5" /></> },
  { line: true, g: <><path d="M0 9l12-7 12 7v14H0z" fill="#fff" /><path d="M1 9h22l-9 5 5 5-8-4z" fill="#000" /></> },
  { line: true, g: <><circle cx="12" cy="12" r="11.200" fill="url(#gv)" stroke="#e6cdea" strokeWidth="1.400" /><path d="M6 6l4 1h4l4-1c1 3 1 5 1 7 0 4-3 5-7 5s-7-1-7-5c0-2 0-4 1-7z" fill="#f3ecf7" /></> },
  { line: true, on: true, g: null },
];

const menus: [string, number, number][] = [["Fichier", 0, 49], ["Édition", 0, 51], ["Affichage", 0, 65], ["Calque", 2, 51], ["Objet", 0, 43], ["Chemin", 0, 56], ["Texte", 0, 42], ["Filtres", 6, 45], ["Extensions", 4, 69], ["Aide", 3, 30]];

export default function App() {
  return (
    <Window>
      <Global /><Defs />
      <TitleBar>
        <InkLogo /><TitleText>map VRMMO masterisé.svg - Inkscape</TitleText>
        <WinButtons>
          <svg width="14" height="12"><path d="M2 6.500h10" stroke="#000" /></svg>
          <svg width="14" height="12" fill="none" stroke="#000"><path d="M2.500 3.500h7v7h-7zM4.500 3V1.500h7v7H10" /></svg>
          <svg width="14" height="12"><path d="M2 1l10 10M12 1L2 11" stroke="#000" /></svg>
        </WinButtons>
      </TitleBar>
      <MenuBar>
        {menus.map(([t, u, w]) => <MenuItem key={t} $w={w}>{t.slice(0, u)}<u>{t[u]}</u>{t.slice(u + 1)}</MenuItem>)}
      </MenuBar>
      <Toolbar>
        {toolbarA.map((g, i) => <ToolIcon key={i}><I>{g}</I></ToolIcon>)}
        <VSep $r={6} />
        {toolbarB.map((g, i) => <ToolIcon key={i}><I>{g}</I></ToolIcon>)}
        <VSep $r={7} $l={4} />
        {toolbarC.map((g, i) => <ToolIcon key={i}><I>{g}</I></ToolIcon>)}
        <VSep $r={14} />
        <FieldLabel $w={17}>X :</FieldLabel><Entry $w={45}>0,000</Entry><Spin />
        <FieldLabel $w={24} $l={8}>Y :</FieldLabel><Entry $w={45}>0,000</Entry><Spin />
        <FieldLabel $w={24} $l={9}>L :</FieldLabel><Entry $w={45}>0,000</Entry><Spin />
        <Center $w={35} $r={8}><Lock /></Center>
        <FieldLabel $w={18}>H :</FieldLabel><Entry $w={45}>0,000</Entry><Spin />
        <Combo $w={42} $h={21} $pad={2}>px<ComboArrow><Chev s={8} /></ComboArrow></Combo>
        <VSep $l={5} $r={6} />
        {toggles.map((g, i) => <Toggle key={i}><I s={12} v={14}>{g}</I></Toggle>)}
      </Toolbar>
      <Body>
        <ToolBox>{toolIcons.map((g, i) => <Tool key={i} $on={i === 0}><I s={24}>{g}</I></Tool>)}</ToolBox>
        <Desk>
          <i /><HRuler /><Center><I s={12} v={16}><circle cx="6.500" cy="6.500" r="5" fill="#ddd" stroke="#888" /><path d="M10 10l5 5" stroke="#999" strokeWidth="2.500" /><path d="M5 4h3v5" {...K} stroke="#666" /></I></Center>
          <VRuler />
          <Sheet><Page><Continent /></Page></Sheet>
          <VScroll><Center $h={17}><Chev r={180} /></Center><VThumb /><Chev c="#bbb" /></VScroll>
          <i /><HScroll $l={4}><Chev r={90} c="#bbb" /><HThumb $w={1020} $l={4} $h={15} /><Chev r={-90} /></HScroll>
          <Center><I s={10} v={10}><path d="M1 0l8 7-7 3z" fill="#5a8a70" /><path d="M3 2l6 5-4 1z" fill="#b87a9a" /></I></Center>
        </Desk>
        <Dock>
          <DockTitle>
            <I s={12} v={16}>{fillStroke}</I><DockName>Remplissage et contour (Maj+Ctrl+F)</DockName>
            <DockBtn><I s={6} v={6}><path d="M5 0v6L1 3z" fill="#444" /></I></DockBtn>
            <DockBtn><I s={8} v={8}><path d="M1 1l6 6M7 1L1 7" stroke="#555" strokeWidth="2" /></I></DockBtn>
          </DockTitle>
          <DockFrame>
            <Tabs>
              <Tab $w={53} $l={4} $on><I s={9} v={9}><path d="M0 0h9v9H0z" fill="url(#gb)" /></I><span><u>F</u>ond</span></Tab>
              <Tab $w={65} $l={1}><I s={9} v={9}><rect x=".5" y=".5" width="8" height="8" fill="#fff" stroke="#888" /></I>Contour</Tab>
              <Tab $w={110} $l={4}><I s={9} v={9}><path d="M0 1.500h9M0 4.500h9" stroke="#444" /><path d="M0 7.500h9" stroke="#444" strokeDasharray="2 1" /><path d="M6 0l3 1.500L6 3" fill="#444" /></I>Style du contour</Tab>
            </Tabs>
            <TabPane>
              <PaintRow>
                <Center $w={19}><I s={12} v={12}><path d="M1.500 1l9 10M10.500 1l-9 10" stroke="#333" strokeWidth="1.800" /></I></Center>
                {["#a2adba", "#cfd4d8", "#b4c0cd", "#c2cbd6", "#a9b3bf"].map((c, i) => (
                  <I key={i} s={20}><path d="M0 0h20v20H0z" fill={c} /><path d="M0 0h20v20H0z" fill="url(#chk)" opacity={i === 1 ? 0.35 : 0.55} />
                    {i === 2 && <circle cx="10" cy="10" r="5" fill="#fff" opacity=".4" />}
                    {i === 3 && <g fill="#eef2f6" opacity=".75"><circle cx="10" cy="10" r="3" /><circle cx="4" cy="4" r="2" /><circle cx="16" cy="4" r="2" /><circle cx="4" cy="16" r="2" /><circle cx="16" cy="16" r="2" /></g>}
                    {i === 4 && <path d="M3 3h12v12H3z" fill="#eee" />}
                    <rect x=".5" y=".5" width="19" height="19" {...K} stroke="#333" strokeDasharray="1 1" /></I>
                ))}
                <Center $w={20}><svg width="14" height="20"><text x="0" y="17.500" fontFamily="DejaVu Sans" fontWeight="bold" fontSize="22" fill="#333" textLength="14" lengthAdjust="spacingAndGlyphs">?</text></svg></Center>
                <Center $ml={33} $gap={10}>
                  <I s={9} v={9}><path d="M1.500 1h2v2h2V1h2v4L4.500 8 1.500 5z" fill="none" stroke="#222" strokeWidth="1.500" /></I>
                  <I s={9} v={9}><path d="M0 1h3l1.500 1L6 1h3v5L4.500 9 0 6z" fill="#333" /></I>
                </Center>
              </PaintRow>
              <NoObject>Aucun objet</NoObject>
            </TabPane>
            <SliderRow><Slider><div><span>Flou (%)</span><span>0,0</span></div></Slider><Spin h={22} /></SliderRow>
            <SliderRow><Slider $on><div><span>Opacité (%)</span><span>100,0</span></div></Slider><Spin h={22} /></SliderRow>
          </DockFrame>
        </Dock>
        <SideBars>
          <IconCol>{commands.map((g, i) => g ? <SideCell key={i}><I>{g}</I></SideCell> : <SideSep key={i} />)}</IconCol>
          <IconCol>{snaps.map((s, i) => s ? <SideCell key={i} $on={s.on}><I>{s.g}</I></SideCell> : <SideSep key={i} />)}</IconCol>
        </SideBars>
      </Body>
      <PaletteBar>
        <Swatches>
          <svg width="15" height="14"><path d="M0 0h15v14H0z" fill="#fff" stroke="#000" /><path d="M1 1l13 12M14 1L1 13" stroke="#600" strokeWidth="1.200" /></svg>
          {palette.map((c, i) => <Swatch key={i} $c={"#" + c} />)}
        </Swatches>
        <svg width="11" height="14"><path d="M7 -1v8L3 3z" /></svg>
      </PaletteBar>
      <PaletteScroll><HScroll $l={3} $r={13}><Chev r={90} c="#bbb" /><HThumb $w={591} $l={5} $h={14} /><Chev r={-90} /></HScroll></PaletteScroll>
      <Status>
        <StylePair><span>Remplissage :</span><span>N/A</span><span>Contour :</span><span>N/A</span></StylePair>
        <FieldLabel $w={19} $l={2}>O :</FieldLabel><Entry $w={36}>0</Entry><Spin />
        <VSep $l={3} $r={4} $h={26} />
        <I s={10} v={10}><ellipse cx="5" cy="5.500" rx="4.500" ry="2.500" fill="#ccc" stroke="#666" /><circle cx="5" cy="5.500" r="2" fill="#444" /><path d="M2 1l1 2M5 0v2M8 1L7 3" stroke="#666" /></I>
        <Center $w={18} $l={1}><Lock /></Center>
        <Combo $w={105} $h={25} $pad={8} $fs={10}>(racine)<ComboArrow><Chev s={8} /></ComboArrow></Combo>
        <Message>Aucun objet sélectionné. Sélectionnez des objets par Clic, Maj+Clic ou Alt+molette, ou cliquez-déplacez autour des objets à sélectionner.</Message>
        <VSep $l={0} $r={3} $h={26} />
        <Coords><div><span>X:</span><span>-8477,20</span></div><div><span>Y:</span><span>8,08</span></div></Coords>
        <FieldLabel $w={16} $mono>Z:</FieldLabel>
        <Entry $w={43} $live $pad={8}>18%</Entry><Spin c="#000" />
        <svg width="21" height="26"><path d="M17 13h2M14 16.500h2M17 16.500h2M11 20h2M14 20h2M17 20h2" stroke="#bbb" strokeWidth="2" /></svg>
      </Status>
      <Taskbar>
        <Start><I s={17} v={17}><path d="M0 2.500l7-1V8H0zM8 1.300L17 0v8H8zM0 9h7v6.500l-7-1zM8 9h9v8l-9-1.300z" fill="#fff" /></I></Start>
        <Search>
          <svg width="22" height="24"><circle cx="11" cy="12" r="9" fill="none" stroke="#fff" strokeWidth="2.600" /></svg>
          <SearchText>Posez-moi une question.</SearchText>
          <svg width="14" height="18" fill="none" stroke="#aaa" strokeWidth="1.200"><rect x="4.500" y="1" width="5" height="10" rx="1.500" /><path d="M1.500 8v5h11V8M7 13v4M4 16.500h6" /></svg>
        </Search>
        <Apps>{apps.map((a, i) => <AppTile key={i} $line={a.line} $on={a.on}>{a.g ? <I s={i === 0 ? 22 : i === 2 || i === 12 ? 24 : 23} v={24}>{a.g}</I> : <InkLogo s={24} />}</AppTile>)}</Apps>
        <Tray>
          <svg width="110" height="22" fill="none" stroke="#fff" strokeWidth="1.200">
            <path d="M3 14l5.500-5.500L14 14" />
            <path d="M28 7h12v8H28zM41 9v4" /><path d="M30 9h9v5h-9z" fill="#fff" /><path d="M25 5v5M23 7h4M22 9h5" />
            <path d="M52 17A12 12 0 0 1 64 5M55 17a9 9 0 0 1 9-8M58 17a6 6 0 0 1 6-5" /><circle cx="62.500" cy="16" r="1.500" fill="#fff" stroke="none" />
            <path d="M73 8.500h3l4-4v13l-4-4h-3zM83 8c1 2 1 4 0 6M86 6c2 3 2 7 0 10M89 4c3 4 3 10 0 14" />
          </svg>
          <Lang>FRA</Lang>
          <Clock>21:48<br />13/08/2017</Clock>
          <Bell><svg width="32" height="32"><path d="M4 5h16v13H12l-4 4v-4H4z" fill="#fff" /><path d="M7 9h10M7 12h10M7 15h7" stroke="#111" /><circle cx="19" cy="20" r="7.500" fill="#2b2b2b" stroke="#888" /><text x="16" y="24.500" fontSize="12" fill="#fff">1</text></svg></Bell>
          <Edge />
        </Tray>
      </Taskbar>
    </Window>
  );
}
